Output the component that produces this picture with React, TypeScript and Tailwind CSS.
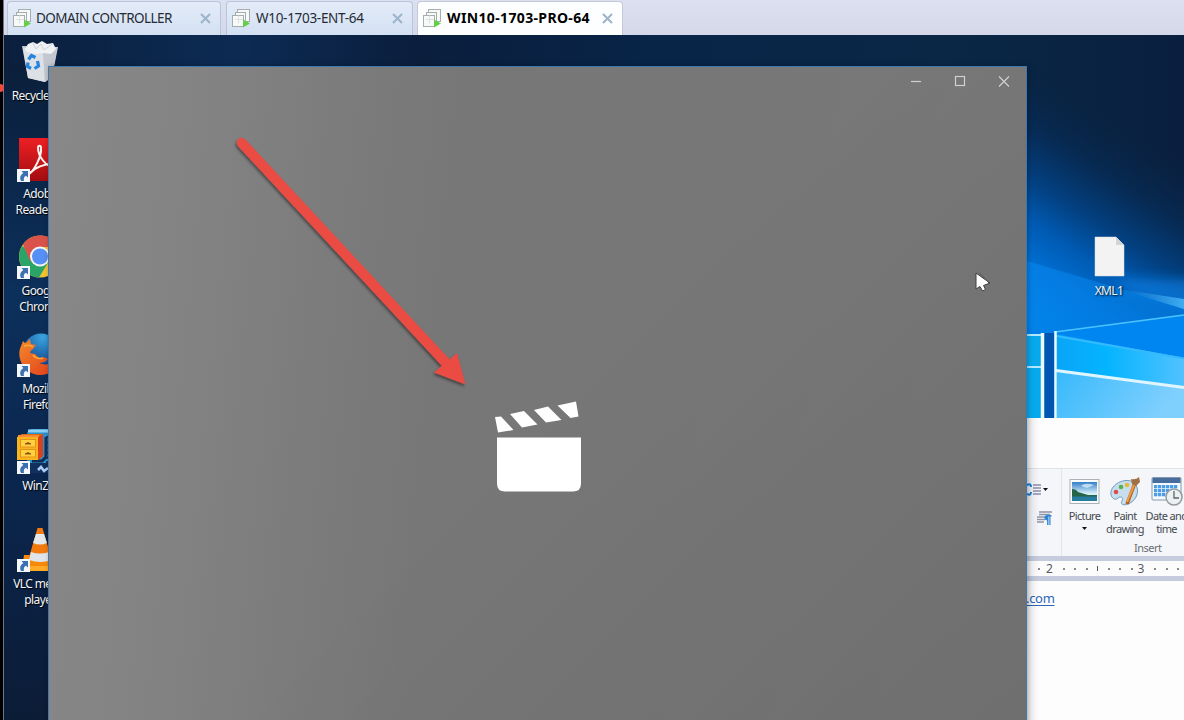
import React from "react";

const ui = "font-['Noto_Sans','Open_Sans',sans-serif]";

function VmIcon() {
  return (
    <svg width="19" height="19" viewBox="0 0 19 19" className="shrink-0">
      <g fill="#f7f9f8" stroke="#a6adad" strokeWidth="1">
        <rect x="5.500" y="0.500" width="12" height="12" />
        <rect x="3.500" y="3.500" width="10" height="10" />
        <rect x="0.500" y="6.500" width="11" height="11" />
      </g>
      <path d="M6.500 6.500v8M3 10.500h8" stroke="#dde2e1" />
      <path d="M11 10.500v8l7-4z" fill="#62cf48" />
    </svg>
  );
}

function CloseGlyph() {
  return (
    <svg width="11" height="11" viewBox="0 0 11 11" className="shrink-0">
      <path d="M1 1l9 9M10 1l-9 9" stroke="#9db5ca" strokeWidth="2.100" />
    </svg>
  );
}

function Tab({ label, size, text, active = false }: { label: string; size: string; text: string; active?: boolean }) {
  return (
    <div
      className={`flex h-[34px] shrink-0 items-center rounded-t-[4px] border border-b-0 pl-[5px] pr-[9px] ${size} ${
        active ? "border-[#c3c9d9] bg-[#fdfeff]" : "border-[#b9c5da] bg-linear-to-b from-[#e4ebf8] to-[#d3e1f3]"
      }`}
    >
      <VmIcon />
      <span className={`relative top-[-0.5px] ml-[4px] flex-1 whitespace-nowrap ${text}`}>{label}</span>
      <CloseGlyph />
    </div>
  );
}

function Shortcut() {
  return (
    <svg width="13" height="13" viewBox="0 0 13 13" className="absolute bottom-[-1px] left-[-2px]">
      <rect width="13" height="13" fill="#f4f7fb" />
      <path d="M4.500 2h6.500v6.500L9 6.800Q6 8 7 12H4Q1.500 7 6.300 4z" fill="#3d70b0" />
    </svg>
  );
}

function RecycleIcon() {
  return (
    <svg width="42" height="43" viewBox="0 0 42 43">
      <path d="M3 6l36 1-6 30-7 5-17-4z" fill="#c9ced6" />
      <path d="M4 8l20 3 2 31-17-4z" fill="#dde1e6" />
      <path d="M24 11l14-3-5 29-7 5z" fill="#c3c8d0" />
      <path d="M6 9l3-5 5-2 4 2 5-3 5 3 6-1 3 6-5 5-8-1-7 1-9-2z" fill="#eff1f3" />
      <path d="M14 3l3 6 5-5 3 6 8-6" stroke="#cdd3da" fill="none" />
      <g fill="none" stroke="#2385dc" strokeWidth="3.200">
        <path d="M9.500 19.500l3-4 4 2" />
        <path d="M18.500 21l1 5-4 2.500" />
        <path d="M12 28.500l-3.500-2 .500-4" />
      </g>
    </svg>
  );
}

function AdobeIcon() {
  return (
    <svg width="42" height="43" viewBox="0 0 42 43">
      <defs>
        <linearGradient id="ad" x2="0" y2="1">
          <stop stopColor="#ed2024" />
          <stop offset="1" stopColor="#a30d10" />
        </linearGradient>
      </defs>
      <rect width="42" height="43" fill="url(#ad)" />
      <path
        d="M10 36C15 33 23 18 22 10c0-3-3-3-3 0 0 8 8 19 16 19 4 0 3-3-2-3-7 0-17 3-23 10z"
        fill="none"
        stroke="#fff4ee"
        strokeWidth="2"
      />
    </svg>
  );
}

function ChromeIcon() {
  return (
    <svg width="42" height="43" viewBox="0 0 42 43">
      <circle cx="21" cy="21.500" r="21" fill="#f2c435" />
      <path d="M21 21.500L3 11A21 21 0 0 0 20 42.500L30 26z" fill="#2ba567" />
      <path d="M21 21.500L11 26 4 9.500A21 21 0 0 1 40 12H21z" fill="#d9534b" />
      <circle cx="21" cy="21.500" r="10" fill="#f4f6f5" />
      <circle cx="21" cy="21.500" r="8" fill="#568ff5" />
    </svg>
  );
}

function FirefoxIcon() {
  return (
    <svg width="42" height="43" viewBox="0 0 42 43">
      <defs>
        <radialGradient id="fb" cx=".55" cy=".1" r=".8">
          <stop stopColor="#3aa5df" />
          <stop offset="1" stopColor="#113f88" />
        </radialGradient>
        <linearGradient id="ff" x2="1" y2="1">
          <stop stopColor="#f58a2a" />
          <stop offset="1" stopColor="#df3a1b" />
        </linearGradient>
      </defs>
      <circle cx="22" cy="19" r="18.500" fill="url(#fb)" />
      <path
        d="M4 8q1 2 3 2l4-4 1 5 5 1-3 4q-3 2-3 4l5 1 4 4q6-2 9 1-3 4-9 4 8 4 20-3-4 15-19 15C7 42-4 26 2 13z"
        fill="url(#ff)"
      />
      <path d="M5 13q5-2 9 1M14 22q4 5 10 3" stroke="#ffa73a" fill="none" strokeWidth="1.500" />
    </svg>
  );
}

function WinZipIcon() {
  return (
    <svg width="42" height="43" viewBox="0 0 42 43" className="overflow-visible">
      <path d="M8 3l4-4h18l6 5v34l-6 5H13l-5-9z" fill="#2f8fcb" />
      <path d="M9 1h20l5 4v28" fill="none" stroke="#8bd0f4" strokeWidth="3" />
      <path d="M13 31h10l4-4v-20" fill="none" stroke="#0d2d54" strokeWidth="3" />
      <path d="M29 6v30" stroke="#143b68" strokeWidth="4" strokeDasharray="3 2" />
      <path d="M11 33h18v10H11z" fill="#12305e" />
      <path d="M19 40l3-3 3 4 4-3" stroke="#a9cff5" strokeWidth="2.500" fill="none" />
      <path d="M-2 7l5-3h21v22l-5 4H-2z" fill="#d96d0b" />
      <rect x="-2" y="7" width="21" height="23" fill="#fbb51c" />
      <path d="M19 7l5-3v22l-5 4z" fill="#d9401b" />
      <path d="M-1 6h21" stroke="#f58a3a" strokeWidth="2" />
      <rect x="1.500" y="9.500" width="15" height="7.500" fill="#ffd03f" stroke="#e0921f" />
      <rect x="1.500" y="19.500" width="15" height="7.500" fill="#ffd03f" stroke="#e0921f" />
      <path d="M6 14l3-1.500 3 1.500zM6 24l3-1.500 3 1.500z" fill="#8a4c0d" stroke="#8a4c0d" strokeWidth=".8" />
    </svg>
  );
}

function VlcIcon() {
  return (
    <svg width="42" height="43" viewBox="0 0 42 43">
      <path d="M5 27h32l4 14H3z" fill="#f68a08" />
      <path d="M3 38h38v5H3z" fill="#ffab25" />
      <path d="M18.500 0q2.500-1.500 5 0l9 31q-11 4-23 0z" fill="#f27a0e" />
      <path d="M17 6h8l3 9q-7 3-14 0z" fill="#e3e8eb" />
      <path d="M12 24q9 3 18 0l2.500 8q-11 4-22.500 0z" fill="#dfe5ea" />
    </svg>
  );
}

function DesktopItem({ icon, label, shortcut = true }: { icon: React.ReactNode; label: string[]; shortcut?: boolean }) {
  return (
    <div className="flex h-[97.500px] w-[76px] flex-col items-center">
      <div className="relative h-[43px] w-[42px]">
        {icon}
        {shortcut && <Shortcut />}
      </div>
      <div className="mt-[5px] flex flex-col items-center text-[12px] leading-[16px] tracking-[-0.6px] whitespace-nowrap text-[#f3f5f8] [text-shadow:1px_1px_1px_#000]">
        {label.map((l) => (
          <span key={l}>{l}</span>
        ))}
      </div>
    </div>
  );
}

function Wallpaper() {
  return (
    <svg className="absolute inset-0" width="1180" height="685" viewBox="4 35 1180 685">
      <defs>
        <linearGradient id="base" x2="1">
          <stop stopColor="#0b1f3d" />
          <stop offset=".2" stopColor="#0c2b53" />
          <stop offset=".35" stopColor="#0b1e3d" />
          <stop offset=".55" stopColor="#082447" />
          <stop offset=".8" stopColor="#0a2746" />
          <stop offset="1" stopColor="#0a1f40" />
        </linearGradient>
        <linearGradient id="side" x2="0" y2="1">
          <stop stopColor="#0b1f3b" />
          <stop offset=".35" stopColor="#0c305c" />
          <stop offset=".6" stopColor="#0b2750" />
          <stop offset="1" stopColor="#0b1c36" />
        </linearGradient>
        <linearGradient id="glow" gradientUnits="userSpaceOnUse" x1="1050" y1="334" x2="1171.500" y2="150.500">
          <stop stopColor="#0084e8" />
          <stop offset=".22" stopColor="#006fd2" />
          <stop offset=".38" stopColor="#005ab2" />
          <stop offset=".54" stopColor="#034080" />
          <stop offset=".72" stopColor="#062c57" />
          <stop offset="1" stopColor="#08233f" stopOpacity="0" />
        </linearGradient>
        <linearGradient id="beam" x2="0" y2="1">
          <stop stopColor="#0a8cf4" stopOpacity=".5" />
          <stop offset=".6" stopColor="#007ce4" stopOpacity=".6" />
          <stop offset="1" stopColor="#0a84ee" stopOpacity=".1" />
        </linearGradient>
        <linearGradient id="ray" x2="1">
          <stop stopColor="#2fa8fa" stopOpacity="0" />
          <stop offset="1" stopColor="#4fbcfb" stopOpacity=".9" />
        </linearGradient>
        <linearGradient id="pane" x2="1">
          <stop stopColor="#0aa4f7" />
          <stop offset=".4" stopColor="#04b4ff" />
          <stop offset="1" stopColor="#51c2ff" />
        </linearGradient>
        <linearGradient id="pane2" x2="1" y2=".3">
          <stop stopColor="#38b9fb" />
          <stop offset="1" stopColor="#80d0fe" />
        </linearGradient>
        <filter id="soft">
          <feGaussianBlur stdDeviation=".7" />
        </filter>
        <filter id="haze" x="-30%" y="-30%" width="160%" height="160%">
          <feGaussianBlur stdDeviation="6" />
        </filter>
      </defs>
      <rect x="4" y="35" width="1180" height="685" fill="url(#base)" />
      <rect x="4" y="66" width="46" height="654" fill="url(#side)" />
      <rect x="1027" y="66" width="157" height="352" fill="url(#glow)" />
      <path d="M1110 278L1200 280V316L1130 292z" fill="#0783ea" opacity=".6" filter="url(#haze)" />
      <path d="M1027 261L1184 308V418H1027z" fill="url(#beam)" />
      <path d="M1120 289L1190 300V311z" fill="url(#ray)" filter="url(#soft)" />
      <path d="M1055 332L1184 315V420H1055z" fill="#0086f0" />
      <path d="M1055 334L1184 358V420H1055z" fill="url(#pane)" />
      <path d="M1057 371L1184 388V420H1057z" fill="url(#pane2)" />
      <path d="M1027 335h14v83h-14z" fill="#07a8ec" />
      <rect x="1044" y="333" width="10" height="86" fill="#0056b0" />
      <g filter="url(#soft)" fill="none">
        <path d="M1055 332L1184 315" stroke="#4bc3ff" strokeWidth="1.600" />
        <path d="M1056 336L1184 358.500" stroke="#35b9ff" strokeWidth="2" />
        <path d="M1056 370.500L1184 387.500" stroke="#dff6ff" strokeWidth="3" />
        <path d="M1027 367h14M1027 335h14" stroke="#afe8ff" strokeWidth="2" />
        <path d="M1042.500 333v86" stroke="#eafbff" strokeWidth="3.500" />
        <path d="M1055.500 331v88" stroke="#eafbff" strokeWidth="2.500" />
      </g>
    </svg>
  );
}

function ListIcon() {
  return (
    <svg width="24" height="16" viewBox="0 0 24 16">
      <path d="M0 3q4-2 4 2M0 12q4 2 4-2" stroke="#1684de" strokeWidth="2" fill="none" />
      <path d="M6 3h8M6 6h8M6 9h8M6 12h8" stroke="#8c8cad" strokeWidth="1.500" />
      <path d="M16 6h5l-2.500 3z" fill="#111" />
    </svg>
  );
}

function ParagraphIcon() {
  return (
    <svg width="16" height="15" viewBox="0 0 16 15" className="ml-[10px]">
      <path d="M2 1h13M2 3.500h11M0 6h8M0 8.500h8M0 11h7" stroke="#8d94a3" strokeWidth="1.500" />
      <path d="M10 4h4.500v1.500h-1V14h-1.200V5.500h-.800V14h-1.400V9.500Q7.500 9 7.500 7 7.500 4 10 4z" fill="#2b86dc" />
    </svg>
  );
}

function PictureIcon() {
  return (
    <svg width="31" height="27" viewBox="0 0 31 27">
      <defs>
        <linearGradient id="sky" x2="0" y2="1">
          <stop stopColor="#327fc8" />
          <stop offset=".6" stopColor="#d5eef9" />
        </linearGradient>
      </defs>
      <rect x="1" y="1.500" width="29" height="24" fill="#fafbfb" stroke="#abb1b6" />
      <rect x="3" y="4" width="25" height="19" fill="url(#sky)" />
      <path d="M3 11q4 0 6 3l10 3h9v2H3z" fill="#266447" />
      <path d="M3 18.500h25v4.500H3z" fill="#277da0" />
      <path d="M12 8q4-4 13-1l-7 3z" fill="#d4ebf8" opacity=".8" />
    </svg>
  );
}

function PaintIcon() {
  return (
    <svg width="32" height="31" viewBox="0 0 32 31">
      <path d="M2 19C0 7 21-1 27 9c4 7 0 16-8 19-5 2-8 0-6-3 2-4-2-5-4-3-3 3-6 0-7-3z" fill="#c7deee" stroke="#6e9ac0" />
      <circle cx="7" cy="16" r="2.300" fill="#dc4d45" />
      <circle cx="12" cy="11" r="2.300" fill="#55b24b" />
      <circle cx="18" cy="9" r="2.300" fill="#e8b83c" />
      <path d="M26 7L18 28" stroke="#ae5f1d" strokeWidth="3.500" />
      <path d="M25.500 8L18 26" stroke="#ef9b42" strokeWidth="2" />
      <path d="M22 3q5 1 8-2l1 5-4 4-4-2z" fill="#a36f45" />
    </svg>
  );
}

function DateIcon() {
  return (
    <svg width="32" height="31" viewBox="0 0 32 31">
      <rect x="1" y="1.500" width="29" height="22.500" rx="1" fill="#f3f9fe" stroke="#8499ad" />
      <rect x="1.500" y="2" width="28" height="5" fill="#476d9d" />
      <g fill="#4f9ce6">
        {[9, 13, 17].map((y) => [3, 7, 11, 15, 19, 23].map((x) => <rect key={`${x}-${y}`} x={x} y={y} width="3.300" height="3.300" />))}
      </g>
      <circle cx="23" cy="21" r="8" fill="#edf0f1" stroke="#92999e" strokeWidth="1.500" />
      <path d="M23 15v7h5" stroke="#5c666f" fill="none" strokeWidth="1.300" />
    </svg>
  );
}

function RibbonButton({ icon, lines, width }: { icon: React.ReactNode; lines: string[]; width: string }) {
  return (
    <div className={`flex shrink-0 flex-col items-center ${width}`}>
      <div className="flex h-[31px] items-center">{icon}</div>
      <div className="mt-[2px] flex flex-col items-center text-[11px] leading-[13px] tracking-[-0.65px] whitespace-nowrap text-[#45494f]">
        {lines.map((l) => (
          <span key={l}>{l}</span>
        ))}
        {lines.length === 1 && (
          <svg width="5" height="3" viewBox="0 0 5 3" className="mt-[5px]">
            <path d="M0 0h5L2.500 3z" fill="#111" />
          </svg>
        )}
      </div>
    </div>
  );
}

function WordPad() {
  return (
    <section className="absolute top-[383px] left-[1023px] flex h-[302px] w-[157px] flex-col overflow-hidden bg-[#fdfdfe]">
      <div className="h-[50px] shrink-0" />
      <div className="flex h-[88px] shrink-0 border-t border-[#e0e2e8] bg-[#f4f6f9]">
        <div className="flex w-[35px] shrink-0 flex-col gap-[13px] border-r border-[#e0e4ea] pt-[13px]">
          <ListIcon />
          <ParagraphIcon />
        </div>
        <div className="flex w-[180px] shrink-0 flex-col">
          <div className="flex pt-[7px] pl-[2px]">
            <RibbonButton icon={<PictureIcon />} lines={["Picture"]} width="w-[41px]" />
            <RibbonButton icon={<PaintIcon />} lines={["Paint", "drawing"]} width="w-[40px]" />
            <RibbonButton icon={<DateIcon />} lines={["Date and", "time"]} width="w-[43px]" />
          </div>
          <span className="mt-[6px] ml-[72px] text-[11px] leading-[14px] tracking-[-0.5px] text-[#6b6e74]">Insert</span>
        </div>
      </div>
      <div className="flex h-[25px] shrink-0 items-center border-y-[5px] border-[#c6ccdd] bg-[#fcfcfd] text-[12px] leading-[15px] text-[#57595f]">
        <div className="flex items-center pl-[11px]">
          <i className="size-[2px] bg-[#888]" />
          <span className="relative top-[-0.5px] ml-[6px] w-[7px]">2</span>
          {[0, 1, 2].map((n) => (
            <i key={n} className="ml-[9.500px] size-[2px] bg-[#888]" />
          ))}
          <i className="ml-[9.500px] h-[5px] w-px bg-[#555]" />
          {[0, 1, 2].map((n) => (
            <i key={n} className="ml-[9.500px] size-[2px] bg-[#888]" />
          ))}
          <span className="relative top-[-0.5px] ml-[5px] w-[7px]">3</span>
          {[0, 1, 2].map((n) => (
            <i key={n} className="ml-[9.500px] size-[2px] bg-[#888]" />
          ))}
        </div>
      </div>
      <span className="mt-[8px] ml-[-1px] text-[13px] leading-[18px] tracking-[-0.3px] text-[#2c68b8] underline underline-offset-2">.com</span>
      <div className="absolute inset-y-0 left-0 w-[12px] bg-linear-to-r from-black/10 to-transparent" />
    </section>
  );
}

function MovieWindow() {
  return (
    <section className="absolute top-[31px] left-[44px] flex h-[660px] w-[979px] flex-col border border-[#3f78ac] bg-[linear-gradient(135deg,transparent_50%,#00000014_100%),linear-gradient(96deg,#888888_0%,#838384_15%,#7b7b7c_30%,#777778_40%,#777777_60%,#787878_100%)] shadow-[1px_0_5px_#00000044]">
      <header className="flex h-[30px] justify-end gap-[29px] pt-[7px] pr-[15px]">
        <svg width="15" height="15" viewBox="0 0 15 15">
          <path d="M3 7.500h10" stroke="#d0d0d0" strokeWidth="1.200" />
        </svg>
        <svg width="15" height="15" viewBox="0 0 15 15">
          <rect x="3.500" y="2.500" width="9" height="9" fill="none" stroke="#d0d0d0" strokeWidth="1.200" />
        </svg>
        <svg width="15" height="15" viewBox="0 0 15 15">
          <path d="M3 2.500l10 10M13 2.500l-10 10" stroke="#d0d0d0" strokeWidth="1.200" />
        </svg>
      </header>
      <div className="flex justify-center pt-[303px] pl-[3px]">
        <svg width="88" height="93" viewBox="495 400 88 93" fill="#fff">
          <path d="M495 417l6-.500 12.500 13.500-15.500 2.500zM510 414l14-3 13.500 13.500-15.500 3zM534 410l14-3.500 13.500 13.500-15.500 2.500zM557.500 405.500l18.500-4 2.500 15-8 1.500z" />
          <path d="M497 437.500h84v46q0 8-8 8h-68q-8 0-8-8z" />
        </svg>
      </div>
    </section>
  );
}

export default function App() {
  return (
    <main className={`relative flex h-[720px] w-[1184px] overflow-hidden bg-black ${ui}`}>
      <div className="w-[4px] shrink-0 border-r border-[#747487]" />
      <div className="flex w-[1180px] flex-col">
        <nav className="flex h-[35px] items-end bg-linear-to-b from-[#dce0f0] to-[#d5d8e9] pl-[3px] text-[14px] leading-[20px] text-[#252b34]">
          <Tab label="DOMAIN CONTROLLER" size="w-[214px]" text="text-[13.500px] tracking-[-0.55px]" />
          <div className="w-[5px]" />
          <Tab label="W10-1703-ENT-64" size="w-[187px]" text="pl-[1px] text-[13.500px] tracking-[-0.3px]" />
          <div className="w-[4px]" />
          <Tab label="WIN10-1703-PRO-64" size="w-[206px]" text="pl-[1px] text-[14px] font-bold tracking-[0.36px] text-black" active />
        </nav>
        <div className="relative h-[685px] overflow-hidden">
          <Wallpaper />
          <div className="absolute top-[5px] left-[-2px] flex flex-col">
            <DesktopItem icon={<RecycleIcon />} label={["Recycle Bin"]} shortcut={false} />
            <DesktopItem icon={<AdobeIcon />} label={["Adobe", "Reader XI"]} />
            <DesktopItem icon={<ChromeIcon />} label={["Google", "Chrome"]} />
            <DesktopItem icon={<FirefoxIcon />} label={["Mozilla", "Firefox"]} />
            <DesktopItem icon={<WinZipIcon />} label={["WinZip"]} />
            <DesktopItem icon={<VlcIcon />} label={["VLC media", "player"]} />
          </div>
          <div className="absolute top-[201px] left-[1080px] flex w-[52px] flex-col items-center">
            <svg width="32" height="42" viewBox="0 0 32 42">
              <path d="M1 1h21l8 8v31H1z" fill="#f3f3f3" stroke="#ddd" strokeWidth=".5" />
              <path d="M22 1v8h8z" fill="#d5d5d5" />
            </svg>
            <span className="mt-[5px] mr-[2px] text-[12px] leading-[16px] tracking-[-0.6px] text-[#eef4fa] [text-shadow:1px_1px_2px_#000]">XML1</span>
          </div>
          <WordPad />
          <MovieWindow />
        </div>
      </div>
      <svg className="absolute inset-0" width="1184" height="720" viewBox="0 0 1184 720">
        <defs>
          <filter id="shade" x="-10%" y="-10%" width="120%" height="120%">
            <feDropShadow dx="-1" dy="2" stdDeviation="1.800" floodOpacity=".45" />
          </filter>
        </defs>
        <g filter="url(#shade)" fill="#ea4b43">
          <path d="M241.700 142.800L447 364" stroke="#ea4b43" strokeWidth="10" strokeLinecap="round" />
          <path d="M465.500 384.500L434 372.500L457 353z" />
        </g>
        <circle cx="0" cy="88" r="4" fill="#ee4b40" />
        <path d="M976 273v16l4-2.500 2.500 4.500 3-1.500-2-4 6.500-2.500z" fill="#fff" stroke="#414141" />
        <path d="M979.500 273l9.500 10" stroke="#555" fill="none" />
      </svg>
    </main>
  );
}
